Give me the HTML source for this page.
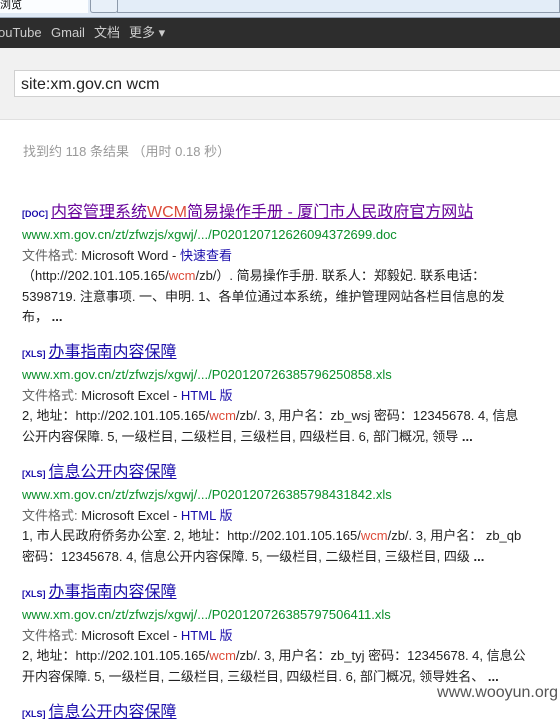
<!DOCTYPE html>
<html><head><meta charset="utf-8"><style>
body{margin:0;width:560px;height:707px;overflow:hidden;background:#fff;font-family:Arial,"Liberation Sans","Noto Sans CJK SC",sans-serif;position:relative}
.tab{position:absolute;top:0;left:0;width:560px;height:17px;background:#dfe9f5;border-bottom:1px solid #9aa7b7}
.tab .t1{position:absolute;left:0;top:0;width:88px;height:13px;background:#fbfdff;font-size:11px;color:#000;line-height:10px}
.tab .t2{position:absolute;left:90px;top:0;width:26px;height:12px;border:1px solid #8d9aab;border-top:none;border-radius:0 0 3px 3px;background:#e8f0f9}
.tab .t3{position:absolute;left:117px;top:0;right:0;height:12px;border:1px solid #8d9aab;border-top:none;background:#e3edf8}
.bar{position:absolute;top:18px;left:0;width:560px;height:30px;background:#2d2d2d;color:#ccc;font-size:13px;line-height:30px;border-bottom:1px solid #111}
.bar span{position:absolute;top:0}
.hdr{position:absolute;top:48px;left:0;width:560px;height:71px;background:#f1f1f1;border-bottom:1px solid #e0e0e0}
.sb{position:absolute;top:70px;left:14px;width:560px;height:27px;background:#fff;border:1px solid #d0d0d0;font-size:16px;line-height:27px;padding-left:6px;box-sizing:border-box;color:#222}
.cnt{position:absolute;top:141px;left:23px;font-size:13px;color:#999}
.r{position:absolute;left:22px;font-size:13px;line-height:20.5px;color:#222;width:540px;white-space:nowrap}
.r .tt{font-size:16px;color:#1a0dab;line-height:22px}
.r .tt a{color:#1a0dab;text-decoration:underline}
.r .tt.v a{color:#660099}
.tag{font-size:9px;color:#1a0dab;font-weight:bold;margin-right:3px}
.u{color:#0a8f2a}
.g{color:#666}
.b{color:#1a0dab}
.w{color:#dd4b39}
.wm{position:absolute;right:2px;top:684px;font-size:16px;color:#555}
</style></head><body>
<div class="tab"><div class="t1">浏览</div><div class="t2"></div><div class="t3"></div></div>
<div class="bar"><span style="left:-2px">ouTube</span><span style="left:51px">Gmail</span><span style="left:94px">文档</span><span style="left:129px">更多 ▾</span></div>
<div class="hdr"></div>
<div class="sb">site:xm.gov.cn wcm</div>
<div class="cnt">找到约 118 条结果 （用时 0.18 秒）</div>

<div class="r" style="top:202px">
<div class="tt v"><span class="tag">[DOC]</span><a>内容管理系统<span class="w">WCM</span>简易操作手册 - 厦门市人民政府官方网站</a></div>
<div class="u">www.xm.gov.cn/zt/zfwzjs/xgwj/.../P020120712626094372699.doc</div>
<div><span class="g">文件格式:</span> Microsoft Word - <span class="b">快速查看</span></div>
<div>（http://202.101.105.165/<span class="w">wcm</span>/zb/）. 简易操作手册. 联系人：郑毅妃. 联系电话：<br>5398719. 注意事项. 一、申明. 1、各单位通过本系统，维护管理网站各栏目信息的发<br>布， <b>...</b></div>
</div>

<div class="r" style="top:342px">
<div class="tt"><span class="tag">[XLS]</span><a>办事指南内容保障</a></div>
<div class="u">www.xm.gov.cn/zt/zfwzjs/xgwj/.../P020120726385796250858.xls</div>
<div><span class="g">文件格式:</span> Microsoft Excel - <span class="b">HTML 版</span></div>
<div>2, 地址：http://202.101.105.165/<span class="w">wcm</span>/zb/. 3, 用户名：zb_wsj 密码：12345678. 4, 信息<br>公开内容保障. 5, 一级栏目, 二级栏目, 三级栏目, 四级栏目. 6, 部门概况, 领导 <b>...</b></div>
</div>

<div class="r" style="top:462px">
<div class="tt"><span class="tag">[XLS]</span><a>信息公开内容保障</a></div>
<div class="u">www.xm.gov.cn/zt/zfwzjs/xgwj/.../P020120726385798431842.xls</div>
<div><span class="g">文件格式:</span> Microsoft Excel - <span class="b">HTML 版</span></div>
<div>1, 市人民政府侨务办公室. 2, 地址：http://202.101.105.165/<span class="w">wcm</span>/zb/. 3, 用户名： zb_qb<br>密码：12345678. 4, 信息公开内容保障. 5, 一级栏目, 二级栏目, 三级栏目, 四级 <b>...</b></div>
</div>

<div class="r" style="top:582px">
<div class="tt"><span class="tag">[XLS]</span><a>办事指南内容保障</a></div>
<div class="u">www.xm.gov.cn/zt/zfwzjs/xgwj/.../P020120726385797506411.xls</div>
<div><span class="g">文件格式:</span> Microsoft Excel - <span class="b">HTML 版</span></div>
<div>2, 地址：http://202.101.105.165/<span class="w">wcm</span>/zb/. 3, 用户名：zb_tyj 密码：12345678. 4, 信息公<br>开内容保障. 5, 一级栏目, 二级栏目, 三级栏目, 四级栏目. 6, 部门概况, 领导姓名、 <b>...</b></div>
</div>

<div class="r" style="top:702px"><div class="tt"><span class="tag">[XLS]</span><a>信息公开内容保障</a></div></div>
<div class="wm">www.wooyun.org</div>
</body></html>
